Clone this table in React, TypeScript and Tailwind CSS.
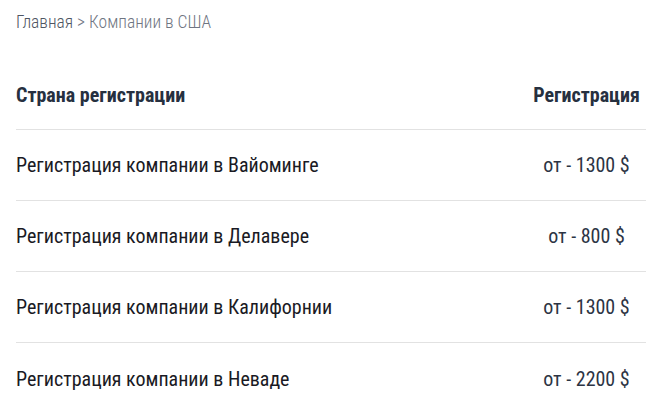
export default function App() {
  const rows = [
    ["Регистрация компании в Вайоминге", "от - 1300 $"],
    ["Регистрация компании в Делавере", "от - 800 $"],
    ["Регистрация компании в Калифорнии", "от - 1300 $"],
    ["Регистрация компании в Неваде", "от - 2200 $"],
  ];
  return (
    <div className="w-[646px] h-[410px] bg-white overflow-hidden pl-4 [font-stretch:85%]" style={{ fontFamily: "Roboto, sans-serif" }}>
      <div className="pt-[11px] h-[60px] text-[17.5px] leading-[22px] text-[#6f7582] font-light">
        <span className="text-[#4f5663]">Главная</span> &gt; Компании в США
      </div>
      <div className="w-[630px]">
        <div className="flex items-center h-[70px] border-b border-[#e2e2e2] text-[20px] font-bold text-[#263040]">
          <div className="flex-1">Страна регистрации</div>
          <div className="w-[119px] text-center">Регистрация</div>
        </div>
        {rows.map(([a, b], i) => (
          <div key={i} className={"flex items-center h-[71px] text-[20px] text-[#1a1a24] " + (i < 3 ? "border-b border-[#e2e2e2]" : "")}>
            <div className="flex-1">{a}</div>
            <div className="w-[119px] text-center text-[#2c3444]">{b}</div>
          </div>
        ))}
      </div>
    </div>
  );
}
